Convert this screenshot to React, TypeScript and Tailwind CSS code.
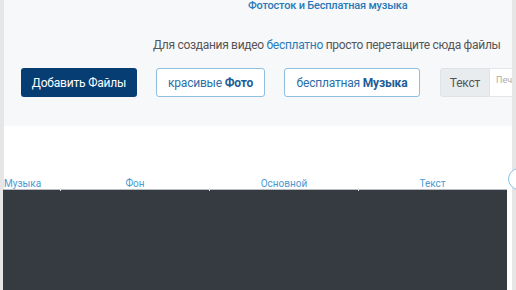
export default function App() {
  const cols = [
    { label: "Музыка", w: "w-[57px]", align: "justify-start" },
    { label: "Фон", w: "w-[149px]", align: "justify-center" },
    { label: "Основной", w: "w-[149px]", align: "justify-center" },
    { label: "Текст", w: "w-[148px]", align: "justify-center" },
  ];

  return (
    <div
      className="flex h-[290px] w-[516px] overflow-hidden bg-white"
      style={{ fontFamily: 'Roboto, "Noto Sans", sans-serif' }}
    >
      <div className="w-[4px] shrink-0 bg-[#e6e6e6]" />

      <div className="flex min-w-0 flex-1 flex-col">
        {/* upload panel */}
        <div className="flex h-[126px] shrink-0 flex-col overflow-hidden bg-[#f7f8fa] pl-[17px]">
          <div className="pl-[227px] text-[11px] font-medium leading-[12px] tracking-[-0.2px] whitespace-nowrap text-[#2a7ab8]">
            Фотосток и Бесплатная музыка
          </div>
          <div className="mt-[25px] pl-[132px] text-[12px] leading-[16px] tracking-[-0.3px] whitespace-nowrap text-[#555]">
            Для создания видео <span className="text-[#2a7ab8]">бесплатно</span> просто перетащите сюда файлы
          </div>
          <div className="mt-[15px] flex items-center gap-[19px] whitespace-nowrap text-[12px] tracking-[-0.2px]">
            <button className="h-[29px] w-[116px] shrink-0 rounded-[3px] bg-[#063d73] text-white">
              Добавить Файлы
            </button>
            <button className="h-[29px] w-[109px] shrink-0 rounded-[3px] border border-[#8fbfe0] bg-white text-[#2d6ea6]">
              красивые <b className="font-bold text-[#1e5d96]">Фото</b>
            </button>
            <button className="h-[29px] w-[136px] shrink-0 rounded-[3px] border border-[#8fbfe0] bg-white text-[#2d6ea6]">
              бесплатная <b className="font-bold text-[#1e5d96]">Музыка</b>
            </button>
            <div className="ml-[1px] flex h-[29px] shrink-0">
              <span className="flex w-[50px] items-center justify-center rounded-l-[3px] border border-[#dfe2e6] bg-[#e9ecef] text-[#555]">
                Текст
              </span>
              <span className="flex w-[60px] items-start overflow-hidden border border-l-0 border-[#e3e6ea] bg-white pl-[6px] pt-[5px] text-[9px] tracking-normal text-[#aaa]">
                Печатайте
              </span>
            </div>
          </div>
        </div>

        {/* timeline */}
        <div className="relative mt-[52px] -ml-[1px] mr-[5px] flex flex-1 flex-col">
          <div className="flex h-[11px] text-[10px] leading-[11px] text-[#4a9ad2]">
            {cols.map((c) => (
              <div key={c.label} className={`${c.w} flex ${c.align} pl-[1px]`}>
                {c.label}
              </div>
            ))}
          </div>
          <div className="flex flex-1 border-t border-[#b9bdc2] bg-[#363a41]">
            {cols.map((c, i) => (
              <div key={c.label} className={`${c.w} relative`}>
                {i > 0 && <div className="absolute -top-[2px] left-0 h-[3px] w-[1px] bg-[#e8e8e8]" />}
              </div>
            ))}
          </div>
          <div className="absolute -right-[23px] -top-[10px] h-[22px] w-[22px] rounded-full border border-[#8cc3e6] bg-white" />
        </div>
      </div>

      <div className="w-[4px] shrink-0 bg-[#e6e6e6]" />
    </div>
  );
}
